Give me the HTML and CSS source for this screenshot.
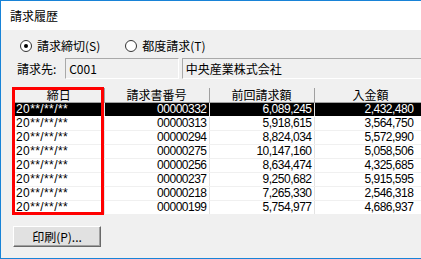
FILE: index.html
```html
<!DOCTYPE html>
<html lang="ja">

<head>
  <meta charset="UTF-8" />
  <title>請求履歴</title>
  <link rel="stylesheet" href="styles.css">
</head>

<body>
  <div class="window">
    <div class="titlebar">請求履歴</div>
    <div class="client">
      <div class="radios">
        <label class="radio"><span class="circle checked"></span>請求締切(S)</label>
        <label class="radio second"><span class="circle"></span>都度請求(T)</label>
      </div>
      <div class="field-row">
        <span class="field-label">請求先:</span>
        <div class="textbox code">C001</div>
        <div class="textbox name">中央産業株式会社</div>
      </div>
      <div class="grid-wrap">
        <table class="grid">
          <colgroup>
            <col class="c1">
            <col class="c2">
            <col class="c3">
            <col class="c4">
          </colgroup>
          <thead>
            <tr>
              <th>締日</th>
              <th>請求書番号</th>
              <th>前回請求額</th>
              <th>入金額</th>
            </tr>
          </thead>
          <tbody>
            <tr class="selected">
              <td class="date">20**/**/**</td>
              <td class="num">00000332</td>
              <td class="num">6,089,245</td>
              <td class="num">2,432,480</td>
            </tr>
            <tr>
              <td class="date">20**/**/**</td>
              <td class="num">00000313</td>
              <td class="num">5,918,615</td>
              <td class="num">3,564,750</td>
            </tr>
            <tr>
              <td class="date">20**/**/**</td>
              <td class="num">00000294</td>
              <td class="num">8,824,034</td>
              <td class="num">5,572,990</td>
            </tr>
            <tr>
              <td class="date">20**/**/**</td>
              <td class="num">00000275</td>
              <td class="num">10,147,160</td>
              <td class="num">5,058,506</td>
            </tr>
            <tr>
              <td class="date">20**/**/**</td>
              <td class="num">00000256</td>
              <td class="num">8,634,474</td>
              <td class="num">4,325,685</td>
            </tr>
            <tr>
              <td class="date">20**/**/**</td>
              <td class="num">00000237</td>
              <td class="num">9,250,682</td>
              <td class="num">5,915,595</td>
            </tr>
            <tr>
              <td class="date">20**/**/**</td>
              <td class="num">00000218</td>
              <td class="num">7,265,330</td>
              <td class="num">2,546,318</td>
            </tr>
            <tr>
              <td class="date">20**/**/**</td>
              <td class="num">00000199</td>
              <td class="num">5,754,977</td>
              <td class="num">4,686,937</td>
            </tr>
          </tbody>
        </table>
        <div class="highlight"></div>
      </div>
      <button class="btn">印刷(P)...</button>
    </div>
  </div>
</body>

</html>
```

FILE: styles.css
```css
html,
body {
  margin: 0;
  padding: 0;
}

body {
  width: 421px;
  height: 259px;
  overflow: hidden;
  font-family: "Noto Sans CJK JP", "Liberation Sans", sans-serif;
  font-size: 12px;
  color: #000;
}

.window {
  box-sizing: border-box;
  width: 423px;
  height: 259px;
  border-top: 1px solid #1883d7;
  border-left: 1px solid #1883d7;
  border-bottom: 1px solid #1883d7;
  display: flex;
  flex-direction: column;
}

.titlebar {
  height: 29px;
  line-height: 29px;
  padding-left: 9px;
  background: #fff;
}

.client {
  flex: 1;
  background: #f0f0f0;
  padding-top: 9px;
}

.radios {
  display: flex;
  height: 13px;
  line-height: 13px;
  margin-left: 19px;
}

.radio {
  display: flex;
  align-items: center;
  gap: 5px;
}

.radio.second {
  margin-left: 25px;
}

.circle {
  box-sizing: border-box;
  width: 12px;
  height: 12px;
  border-radius: 50%;
  border: 1px solid #333;
  background: #fff;
  position: relative;
}

.circle.checked::after {
  content: "";
  position: absolute;
  left: 3px;
  top: 3px;
  width: 4px;
  height: 4px;
  border-radius: 50%;
  background: #000;
}

.field-row {
  display: flex;
  align-items: center;
  margin-top: 6px;
  margin-left: 16px;
  height: 21px;
}

.field-label {
  width: 52px;
}

.textbox {
  box-sizing: border-box;
  height: 21px;
  line-height: 19px;
  padding-left: 3px;
  border: 1px solid #a9a9a9;
  border-right-color: #fff;
  border-bottom-color: #fff;
  background: #f0f0f0;
}

.textbox.code {
  width: 122px;
}

.textbox.name {
  width: 260px;
  margin-left: 3px;
}

.grid-wrap {
  position: relative;
  margin-top: 9px;
  margin-left: 13px;
  height: 127px;
}

.grid {
  border-collapse: collapse;
  table-layout: fixed;
  width: 420px;
  background: #fff;
}

.grid .c1 {
  width: 90px;
}

.grid .c2,
.grid .c3 {
  width: 105px;
}

.grid .c4 {
  width: 120px;
}

.grid th,
.grid td {
  box-sizing: border-box;
  padding: 0 2px;
  height: 14px;
  line-height: 13px;
  white-space: nowrap;
  font-weight: normal;
}

.grid th {
  background: #f0f0f0;
  border-right: 1px solid #a0a0a0;
  border-bottom: 1px solid #a0a0a0;
  text-align: center;
}

.grid thead tr:first-child th:last-child {
  text-align: left;
  padding-left: 38px;
}

.grid td {
  font-family: "Liberation Sans", sans-serif;
  font-size: 12px;
  border-bottom: 1px solid #f0f0f0;
  border-right: 1px solid #e3e3e3;
}

.grid td.date {
  letter-spacing: 0.4px;
}

.grid td.num {
  text-align: right;
  letter-spacing: -0.5px;
}

.grid td:last-child {
  text-align: left;
  padding-left: 50px;
}

.grid tr.selected td {
  background: #000;
  color: #fff;
  border-bottom-color: #fff;
}

.highlight {
  position: absolute;
  left: -2px;
  top: -1px;
  width: 86px;
  height: 122px;
  border: 3px solid #f00;
}

.btn {
  display: block;
  box-sizing: border-box;
  margin-top: 11px;
  margin-left: 12px;
  width: 88px;
  height: 21px;
  padding: 0;
  font-family: "Noto Sans CJK JP", "Liberation Sans", sans-serif;
  font-size: 12px;
  background: #e1e1e1;
  border: 1px solid #fff;
  border-right-color: #696969;
  border-bottom-color: #696969;
  box-shadow: inset -1px -1px 0 #a0a0a0;
}
```
